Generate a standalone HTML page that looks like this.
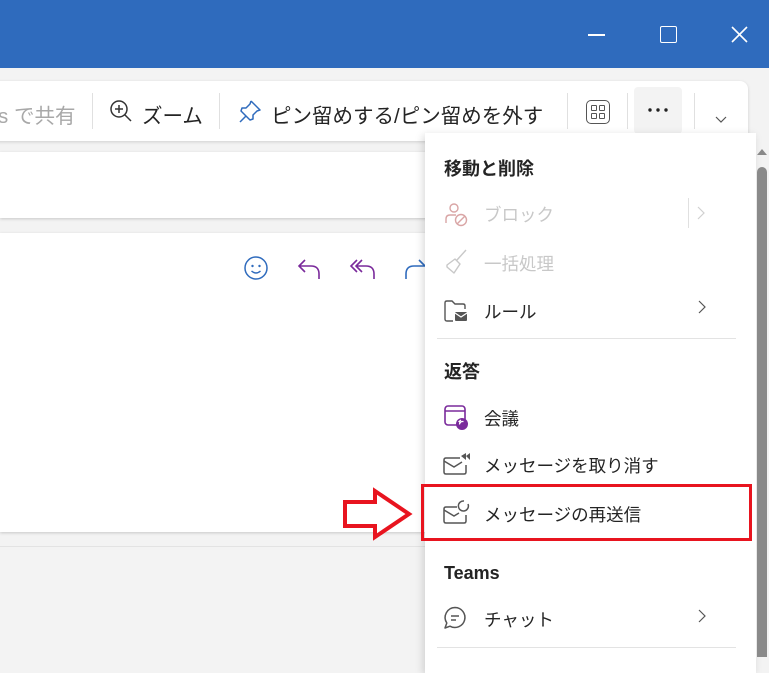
<!DOCTYPE html>
<html><head><meta charset="utf-8"><style>
*{margin:0;padding:0;box-sizing:border-box}
body{width:769px;height:653px;overflow:hidden;background:#f3f3f3;position:relative;font-family:"Liberation Sans","Noto Sans CJK JP",sans-serif;color:#242424}
.abs{position:absolute}
.tb{left:0;top:0;width:769px;height:68px;background:#2f6bbd}
.card{background:#fff}
.t{font-size:20.5px;white-space:nowrap}
.sep{width:1px;background:#e0e0e0}
.mi{position:absolute;left:444px;font-size:17.5px;white-space:nowrap}
.mh{position:absolute;left:444px;font-size:18px;font-weight:bold;white-space:nowrap}
svg{position:absolute;overflow:visible}
</style></head><body>
<div class="abs tb"></div>
<div class="abs" style="left:588px;top:34px;width:17px;height:1.5px;background:#fff"></div>
<div class="abs" style="left:660px;top:26px;width:17px;height:17px;border:1.5px solid #fff;border-radius:2px"></div>
<svg style="left:731px;top:26px" width="17" height="17"><path d="M1 1L16 16M16 1L1 16" stroke="#fff" stroke-width="1.6"/></svg>

<div class="abs card" style="left:-10px;top:81px;width:758px;height:60px;border-radius:8px;box-shadow:0 1px 3px rgba(0,0,0,.15)"></div>
<div class="abs t" style="left:-2px;top:99px;color:#a8a8a8">s で共有</div>
<div class="abs sep" style="left:92px;top:93px;height:36px"></div>
<svg style="left:109px;top:99px" width="24" height="24"><circle cx="10" cy="10" r="8" fill="none" stroke="#333" stroke-width="1.5"/><path d="M16 16l6 6M10 6v8M6 10h8" stroke="#333" stroke-width="1.5"/></svg>
<div class="abs t" style="left:142px;top:99px">ズーム</div>
<div class="abs sep" style="left:219px;top:93px;height:36px"></div>
<svg style="left:238px;top:99px" width="24" height="24"><path d="M13 2l9 9-3 1-4 4 0 4-3 1-4-4-6 6M13 2l-1 3-4 4-4 0-1 3 9 9" fill="none" stroke="#2f6bbd" stroke-width="1.5" stroke-linejoin="round"/></svg>
<div class="abs t" style="left:271px;top:99px">ピン留めする/ピン留めを外す</div>
<div class="abs sep" style="left:567px;top:93px;height:36px"></div>
<div class="abs" style="left:586px;top:100px;width:24px;height:24px;border:1.5px solid #555;border-radius:5px"></div>
<div class="abs" style="left:591px;top:105px;width:6px;height:6px;border:1.3px solid #555;border-radius:1px"></div>
<div class="abs" style="left:599px;top:105px;width:6px;height:6px;border:1.3px solid #555;border-radius:1px"></div>
<div class="abs" style="left:591px;top:113px;width:6px;height:6px;border:1.3px solid #555;border-radius:1px"></div>
<div class="abs" style="left:599px;top:113px;width:6px;height:6px;border:1.3px solid #555;border-radius:1px"></div>
<div class="abs sep" style="left:627px;top:93px;height:36px"></div>
<div class="abs" style="left:634px;top:87px;width:48px;height:47px;background:#f3f3f3;border-radius:4px"></div>
<svg style="left:648px;top:108px" width="20" height="4"><circle cx="2" cy="2" r="1.7" fill="#222"/><circle cx="10" cy="2" r="1.7" fill="#222"/><circle cx="18" cy="2" r="1.7" fill="#222"/></svg>
<div class="abs sep" style="left:694px;top:93px;height:36px"></div>
<svg style="left:715px;top:116px" width="12" height="8"><path d="M1 1l5 5 5-5" fill="none" stroke="#555" stroke-width="1.2"/></svg>

<div class="abs card" style="left:0;top:152px;width:430px;height:66px;box-shadow:0 1px 3px rgba(0,0,0,.18)"></div>
<div class="abs card" style="left:0;top:233px;width:430px;height:299px;box-shadow:0 1px 3px rgba(0,0,0,.18)"></div>
<div class="abs" style="left:0;top:546px;width:430px;height:1px;background:#e3e3e3"></div>
<svg style="left:244px;top:256px" width="24" height="24"><circle cx="12" cy="12" r="11" fill="none" stroke="#2f6bbd" stroke-width="1.5"/><circle cx="8.5" cy="10" r="1.2" fill="#2f6bbd"/><circle cx="15.5" cy="10" r="1.2" fill="#2f6bbd"/><path d="M7.5 15q4.5 4 9 0" fill="none" stroke="#2f6bbd" stroke-width="1.5"/></svg>
<svg style="left:298px;top:259px" width="24" height="22"><path d="M7 1L1 7l6 6M1 7h12q8 0 8 8v5" fill="none" stroke="#7a2a9b" stroke-width="1.6"/></svg>
<svg style="left:350px;top:259px" width="26" height="22"><path d="M7 1L1 7l6 6M12 1L6 7l6 6M6 7h10q8 0 8 8v5" fill="none" stroke="#7a2a9b" stroke-width="1.6"/></svg>
<svg style="left:405px;top:259px" width="20" height="22"><path d="M14 1l6 6M1 20v-5q0-8 8-8h11" fill="none" stroke="#2f6bbd" stroke-width="1.6"/></svg>

<div class="abs card" style="left:425px;top:133px;width:331px;height:540px;box-shadow:-2px 2px 8px rgba(0,0,0,.15)"></div>
<svg style="left:757px;top:148px" width="10" height="8"><path d="M0 7L5 1L10 7Z" fill="#8a8a8a"/></svg>
<div class="abs" style="left:757px;top:167px;width:10px;height:490px;background:#8a8a8a;border-radius:5px 5px 0 0"></div>

<div class="mh" style="top:155px">移動と削除</div>
<svg style="left:444px;top:203px" width="24" height="24"><circle cx="10" cy="5" r="4" fill="none" stroke="#d9a5a5" stroke-width="1.4"/><path d="M2 20v-4q0-4 4-4h6" fill="none" stroke="#d9a5a5" stroke-width="1.4"/><circle cx="17" cy="17" r="5.5" fill="none" stroke="#d9a5a5" stroke-width="1.4"/><path d="M13 21l8-8" stroke="#d9a5a5" stroke-width="1.4"/></svg>
<div class="mi" style="left:484px;top:202px;color:#c8c8c8">ブロック</div>
<div class="abs" style="left:688px;top:198px;width:1px;height:30px;background:#e0e0e0"></div>
<svg style="left:697px;top:206px" width="8" height="14"><path d="M1 1l6 6-6 6" fill="none" stroke="#d0d0d0" stroke-width="1.2"/></svg>
<svg style="left:444px;top:249px" width="24" height="26"><path d="M22 1l-9 10M3 16l8-6 5 5-6 9-7-6z" fill="none" stroke="#c8c8c8" stroke-width="1.4" stroke-linejoin="round"/></svg>
<div class="mi" style="left:484px;top:251px;color:#c8c8c8">一括処理</div>
<svg style="left:443px;top:299px" width="26" height="24"><path d="M2 20V4q0-2 2-2h5l3 3h8q2 0 2 2v3M2 20q0 2 2 2h6" fill="none" stroke="#555" stroke-width="1.4"/><rect x="12" y="13" width="12" height="9" rx="1" fill="#555"/><path d="M12 14l6 4 6-4" stroke="#fff" stroke-width="1.2" fill="none"/></svg>
<div class="mi" style="left:484px;top:299px">ルール</div>
<svg style="left:698px;top:300px" width="8" height="14"><path d="M1 1l6 6-6 6" fill="none" stroke="#555" stroke-width="1.2"/></svg>
<div class="abs" style="left:437px;top:338px;width:299px;height:1px;background:#e3e3e3"></div>

<div class="mh" style="top:358px">返答</div>
<svg style="left:444px;top:405px" width="26" height="26"><rect x="1" y="1" width="20" height="19" rx="3" fill="none" stroke="#7a2a9b" stroke-width="1.6"/><path d="M1 6h20" stroke="#7a2a9b" stroke-width="1.6"/><circle cx="18" cy="19" r="6" fill="#7a2a9b"/><path d="M15.5 19.5q0-3 3-3h1M17 15l-2 1.5 2 1.5" stroke="#fff" stroke-width="1.2" fill="none"/></svg>
<div class="mi" style="left:484px;top:406px">会議</div>
<svg style="left:443px;top:452px" width="28" height="24"><path d="M17 6H3q-2 0-2 2v12q0 2 2 2h18q2 0 2-2v-7" fill="none" stroke="#555" stroke-width="1.5"/><path d="M1 9l10 6 8-5" fill="none" stroke="#555" stroke-width="1.5"/><path d="M18 4l5-3v7zM23 4l4-3v7z" fill="#555"/></svg>
<div class="mi" style="left:484px;top:453px">メッセージを取り消す</div>

<div class="abs" style="left:421px;top:484px;width:331px;height:57px;border:3.5px solid #e8141f"></div>
<svg style="left:343px;top:489px" width="70" height="50"><path d="M2 13H32V2L66 25L32 48V37H2Z" fill="#fff" stroke="#e8141f" stroke-width="4" stroke-linejoin="miter"/></svg>
<svg style="left:443px;top:499px" width="28" height="26"><path d="M14 8H3q-2 0-2 2v12q0 2 2 2h18q2 0 2-2v-6" fill="none" stroke="#555" stroke-width="1.5"/><path d="M1 11l10 6 5-3" fill="none" stroke="#555" stroke-width="1.5"/><path d="M25 5a5 5 0 1 1-4-3" fill="none" stroke="#555" stroke-width="1.5"/></svg>
<div class="mi" style="left:484px;top:502px">メッセージの再送信</div>

<div class="mh" style="top:563px;font-family:'Liberation Sans',sans-serif">Teams</div>
<svg style="left:443px;top:606px" width="24" height="24"><path d="M12 1.5a10 10 0 1 1-5 18.7L2 22l1.8-5A10 10 0 0 1 12 1.5z" fill="none" stroke="#555" stroke-width="1.5" stroke-linejoin="round"/><path d="M8 10h8M8 14h5" stroke="#555" stroke-width="1.5"/></svg>
<div class="mi" style="left:484px;top:607px">チャット</div>
<svg style="left:698px;top:609px" width="8" height="14"><path d="M1 1l6 6-6 6" fill="none" stroke="#555" stroke-width="1.2"/></svg>
<div class="abs" style="left:437px;top:647px;width:299px;height:1px;background:#e3e3e3"></div>
</body></html>
